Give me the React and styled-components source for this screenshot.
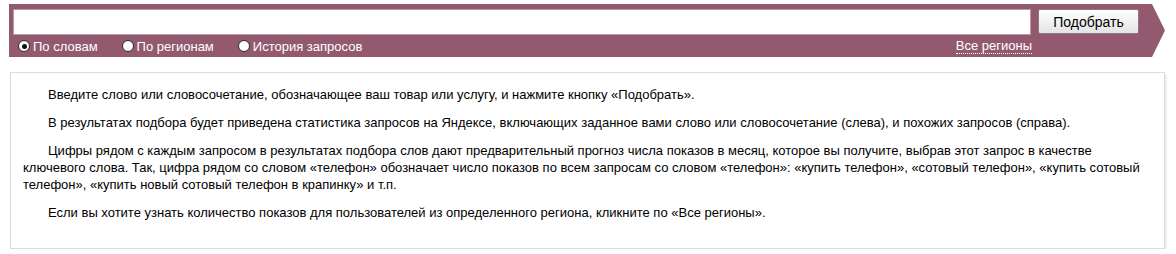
import React from "react";
import styled, { createGlobalStyle } from "styled-components";

const GlobalStyle = createGlobalStyle`
  body {
    margin: 0;
    background: #fff;
    font-family: "Liberation Sans", Arial, sans-serif;
    color: #000;
  }
`;

const Page = styled.div`
  padding: 4px 0 0 9px;
  width: 1156px;
`;

const Band = styled.div`
  background: #935a6f;
  height: 53px;
  width: 1156px;
  box-sizing: border-box;
  padding: 5px 0 0 4px;
  clip-path: polygon(0 0, 1143px 0, 1156px 50%, 1143px 100%, 0 100%);
`;

const SearchRow = styled.div`
  display: flex;
  align-items: flex-start;
  gap: 7px;
`;

const Query = styled.input`
  width: 1018px;
  height: 26px;
  box-sizing: border-box;
  border: 1px solid #b99aa6;
  background: #fff;
  outline: none;
  padding: 0 4px;
  font: 13px "Liberation Sans", Arial, sans-serif;
`;

const Submit = styled.button`
  width: 101px;
  height: 25px;
  box-sizing: border-box;
  border: 1px solid #8a7a80;
  border-radius: 2px;
  background: linear-gradient(#ffffff, #e4e4e4);
  font: 14px "Liberation Sans", Arial, sans-serif;
  color: #000;
  padding: 0;
  cursor: pointer;
`;

const ModeRow = styled.div`
  display: flex;
  align-items: center;
  height: 22px;
  padding-left: 5px;
  padding-right: 133px;
`;

const Mode = styled.label`
  display: flex;
  align-items: center;
  gap: 3px;
  margin-right: ${(p) => p.$gap}px;
  font-size: 13px;
  color: #fff;
  cursor: pointer;
`;

const Dot = styled.span`
  width: 12px;
  height: 12px;
  border-radius: 50%;
  box-sizing: border-box;
  background: #fff;
  border: 1.5px solid #2a2a2a;
  display: flex;
  align-items: center;
  justify-content: center;

  &::after {
    content: "";
    width: 5px;
    height: 5px;
    border-radius: 50%;
    background: ${(p) => (p.$on ? "#111" : "transparent")};
  }
`;

const Regions = styled.a`
  margin-left: auto;
  font-size: 13px;
  color: #fff;
  text-decoration: none;
  border-bottom: 1px dotted #fff;
  line-height: 14px;
  cursor: pointer;
`;

const Hint = styled.div`
  margin: 15px 0 0 1px;
  width: 1155px;
  height: 177px;
  box-sizing: border-box;
  border: 1px solid #dcdcdc;
  box-shadow: 1px 2px 2px rgba(0, 0, 0, 0.12);
  padding: 13px 22px 0 12px;
  font-size: 13px;
  line-height: 17px;
`;

const Para = styled.p`
  margin: 0 0 11px;
  text-indent: 25px;
`;

const modes = [
  { label: "По словам", on: true, gap: 24 },
  { label: "По регионам", gap: 24 },
  { label: "История запросов", gap: 0 },
];

export default function App() {
  return (
    <>
      <GlobalStyle />
      <Page>
        <Band>
          <SearchRow>
            <Query type="text" />
            <Submit>Подобрать</Submit>
          </SearchRow>
          <ModeRow>
            {modes.map((m) => (
              <Mode key={m.label} $gap={m.gap}>
                <Dot $on={m.on} />
                {m.label}
              </Mode>
            ))}
            <Regions>Все регионы</Regions>
          </ModeRow>
        </Band>
        <Hint>
          <Para>
            Введите слово или словосочетание, обозначающее ваш товар или услугу, и нажмите кнопку «Подобрать».
          </Para>
          <Para>
            В результатах подбора будет приведена статистика запросов на Яндексе, включающих заданное вами слово или словосочетание (слева), и похожих запросов (справа).
          </Para>
          <Para>
            Цифры рядом с каждым запросом в результатах подбора слов дают предварительный прогноз числа показов в месяц, которое вы получите, выбрав этот запрос в качестве ключевого слова. Так, цифра рядом со словом «телефон» обозначает число показов по всем запросам со словом «телефон»: «купить телефон», «сотовый телефон», «купить сотовый телефон», «купить новый сотовый телефон в крапинку» и т.п.
          </Para>
          <Para>
            Если вы хотите узнать количество показов для пользователей из определенного региона, кликните по «Все регионы».
          </Para>
        </Hint>
      </Page>
    </>
  );
}
